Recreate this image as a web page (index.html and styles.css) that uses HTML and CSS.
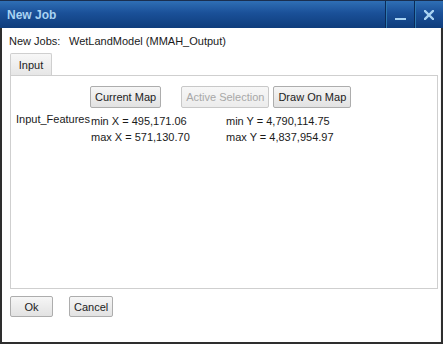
FILE: index.html
```html
<!DOCTYPE html>
<html>
<head>
<meta charset="utf-8">
<link rel="stylesheet" href="styles.css">
</head>
<body>
<div class="window">
  <div class="titlebar">
    <span class="title">New Job</span>
    <div class="tbtns">
      <div class="tbtn"><span class="minbar"></span></div>
      <div class="tbtn"><svg width="10" height="10" viewBox="0 0 10 10"><path d="M1 1 L9 9 M9 1 L1 9" stroke="#a9d3f2" stroke-width="2.4" stroke-linecap="square"/></svg></div>
    </div>
  </div>
  <div class="content">
    <div class="jobline"><span class="jl-label">New Jobs:</span><span>WetLandModel (MMAH_Output)</span></div>
    <div class="tabs"><div class="tab">Input</div></div>
    <div class="panel">
      <div class="label">Input_Features</div>
      <div class="right">
        <div class="btnrow">
          <button class="btn">Current Map</button>
          <button class="btn disabled sp">Active Selection</button>
          <button class="btn">Draw On Map</button>
        </div>
        <div class="coords">
          <span>min X = 495,171.06</span><span>min Y = 4,790,114.75</span>
          <span>max X = 571,130.70</span><span>max Y = 4,837,954.97</span>
        </div>
      </div>
    </div>
    <div class="footer">
      <button class="btn fbtn">Ok</button>
      <button class="btn fbtn">Cancel</button>
    </div>
  </div>
</div>
</body>
</html>
```
FILE: styles.css
```css
html, body { margin: 0; padding: 0; }
body { font-family: "Liberation Sans", Arial, sans-serif; font-size: 11px; color: #1a1a1a; background: #fff; }
.window { width: 443px; height: 344px; box-sizing: border-box; background: #2e2e2e; padding: 0 2px 2px 2px; display: flex; flex-direction: column; }
.titlebar { height: 28px; margin: 0 -2px; box-sizing: border-box; border-top: 1px solid #1a2f4f; background: linear-gradient(#2f6fb5, #1a5098 45%, #0f3d7c); display: flex; align-items: center; }
.title { color: #a9d3f2; font-weight: bold; font-size: 12px; padding-left: 7px; flex: 1; }
.tbtns { display: flex; height: 100%; }
.tbtn { width: 28px; height: 100%; border-left: 1px solid #0a2a58; box-shadow: inset 1px 0 0 #2e78b0; display: flex; align-items: center; justify-content: center; }
.minbar { display: block; width: 11px; height: 2px; background: #a9d3f2; margin-top: 9px; }
.content { flex: 1; background: #fff; border-right: 1px solid #f4f4f4; padding: 0 0 0 8px; display: flex; flex-direction: column; }
.jobline { height: 14px; line-height: 14px; margin-top: 6px; margin-left: -1px; display: flex; }
.jl-label { width: 60px; }
.tabs { margin-top: 5px; display: flex; }
.tab { width: 42px; height: 22px; box-sizing: border-box; border: 1px solid #cfcfcf; border-bottom: none; border-radius: 2px 2px 0 0; background: linear-gradient(#f7f7f7, #e6e6e6); text-align: center; line-height: 22px; color: #222; }
.panel { width: 428px; height: 214px; box-sizing: border-box; border: 1px solid #cfcfcf; display: flex; padding: 10px 0 0 5px; }
.label { width: 74px; padding-top: 27px; }
.right { display: flex; flex-direction: column; }
.btnrow { display: flex; }
.btn { font-family: "Liberation Sans", Arial, sans-serif; font-size: 11px; color: #222; height: 22px; padding: 0 4px; border: 1px solid #adadad; border-radius: 2px; background: linear-gradient(#f6f6f6, #e2e2e2); margin: 0; }
.btn + .btn { margin-left: 4px; }
.btn.sp { margin-left: 20px; }
.btn.disabled { color: #a8a8a8; border-color: #c8c8c8; background: linear-gradient(#f7f7f7, #ececec); }
.coords { display: grid; grid-template-columns: 135px auto; line-height: 16px; margin-top: 5px; padding-left: 1px; }
.footer { display: flex; margin-top: 7px; margin-left: 0; }
.fbtn { height: 21px; min-width: 43px; }
.footer .btn + .btn { margin-left: 16px; }
```
